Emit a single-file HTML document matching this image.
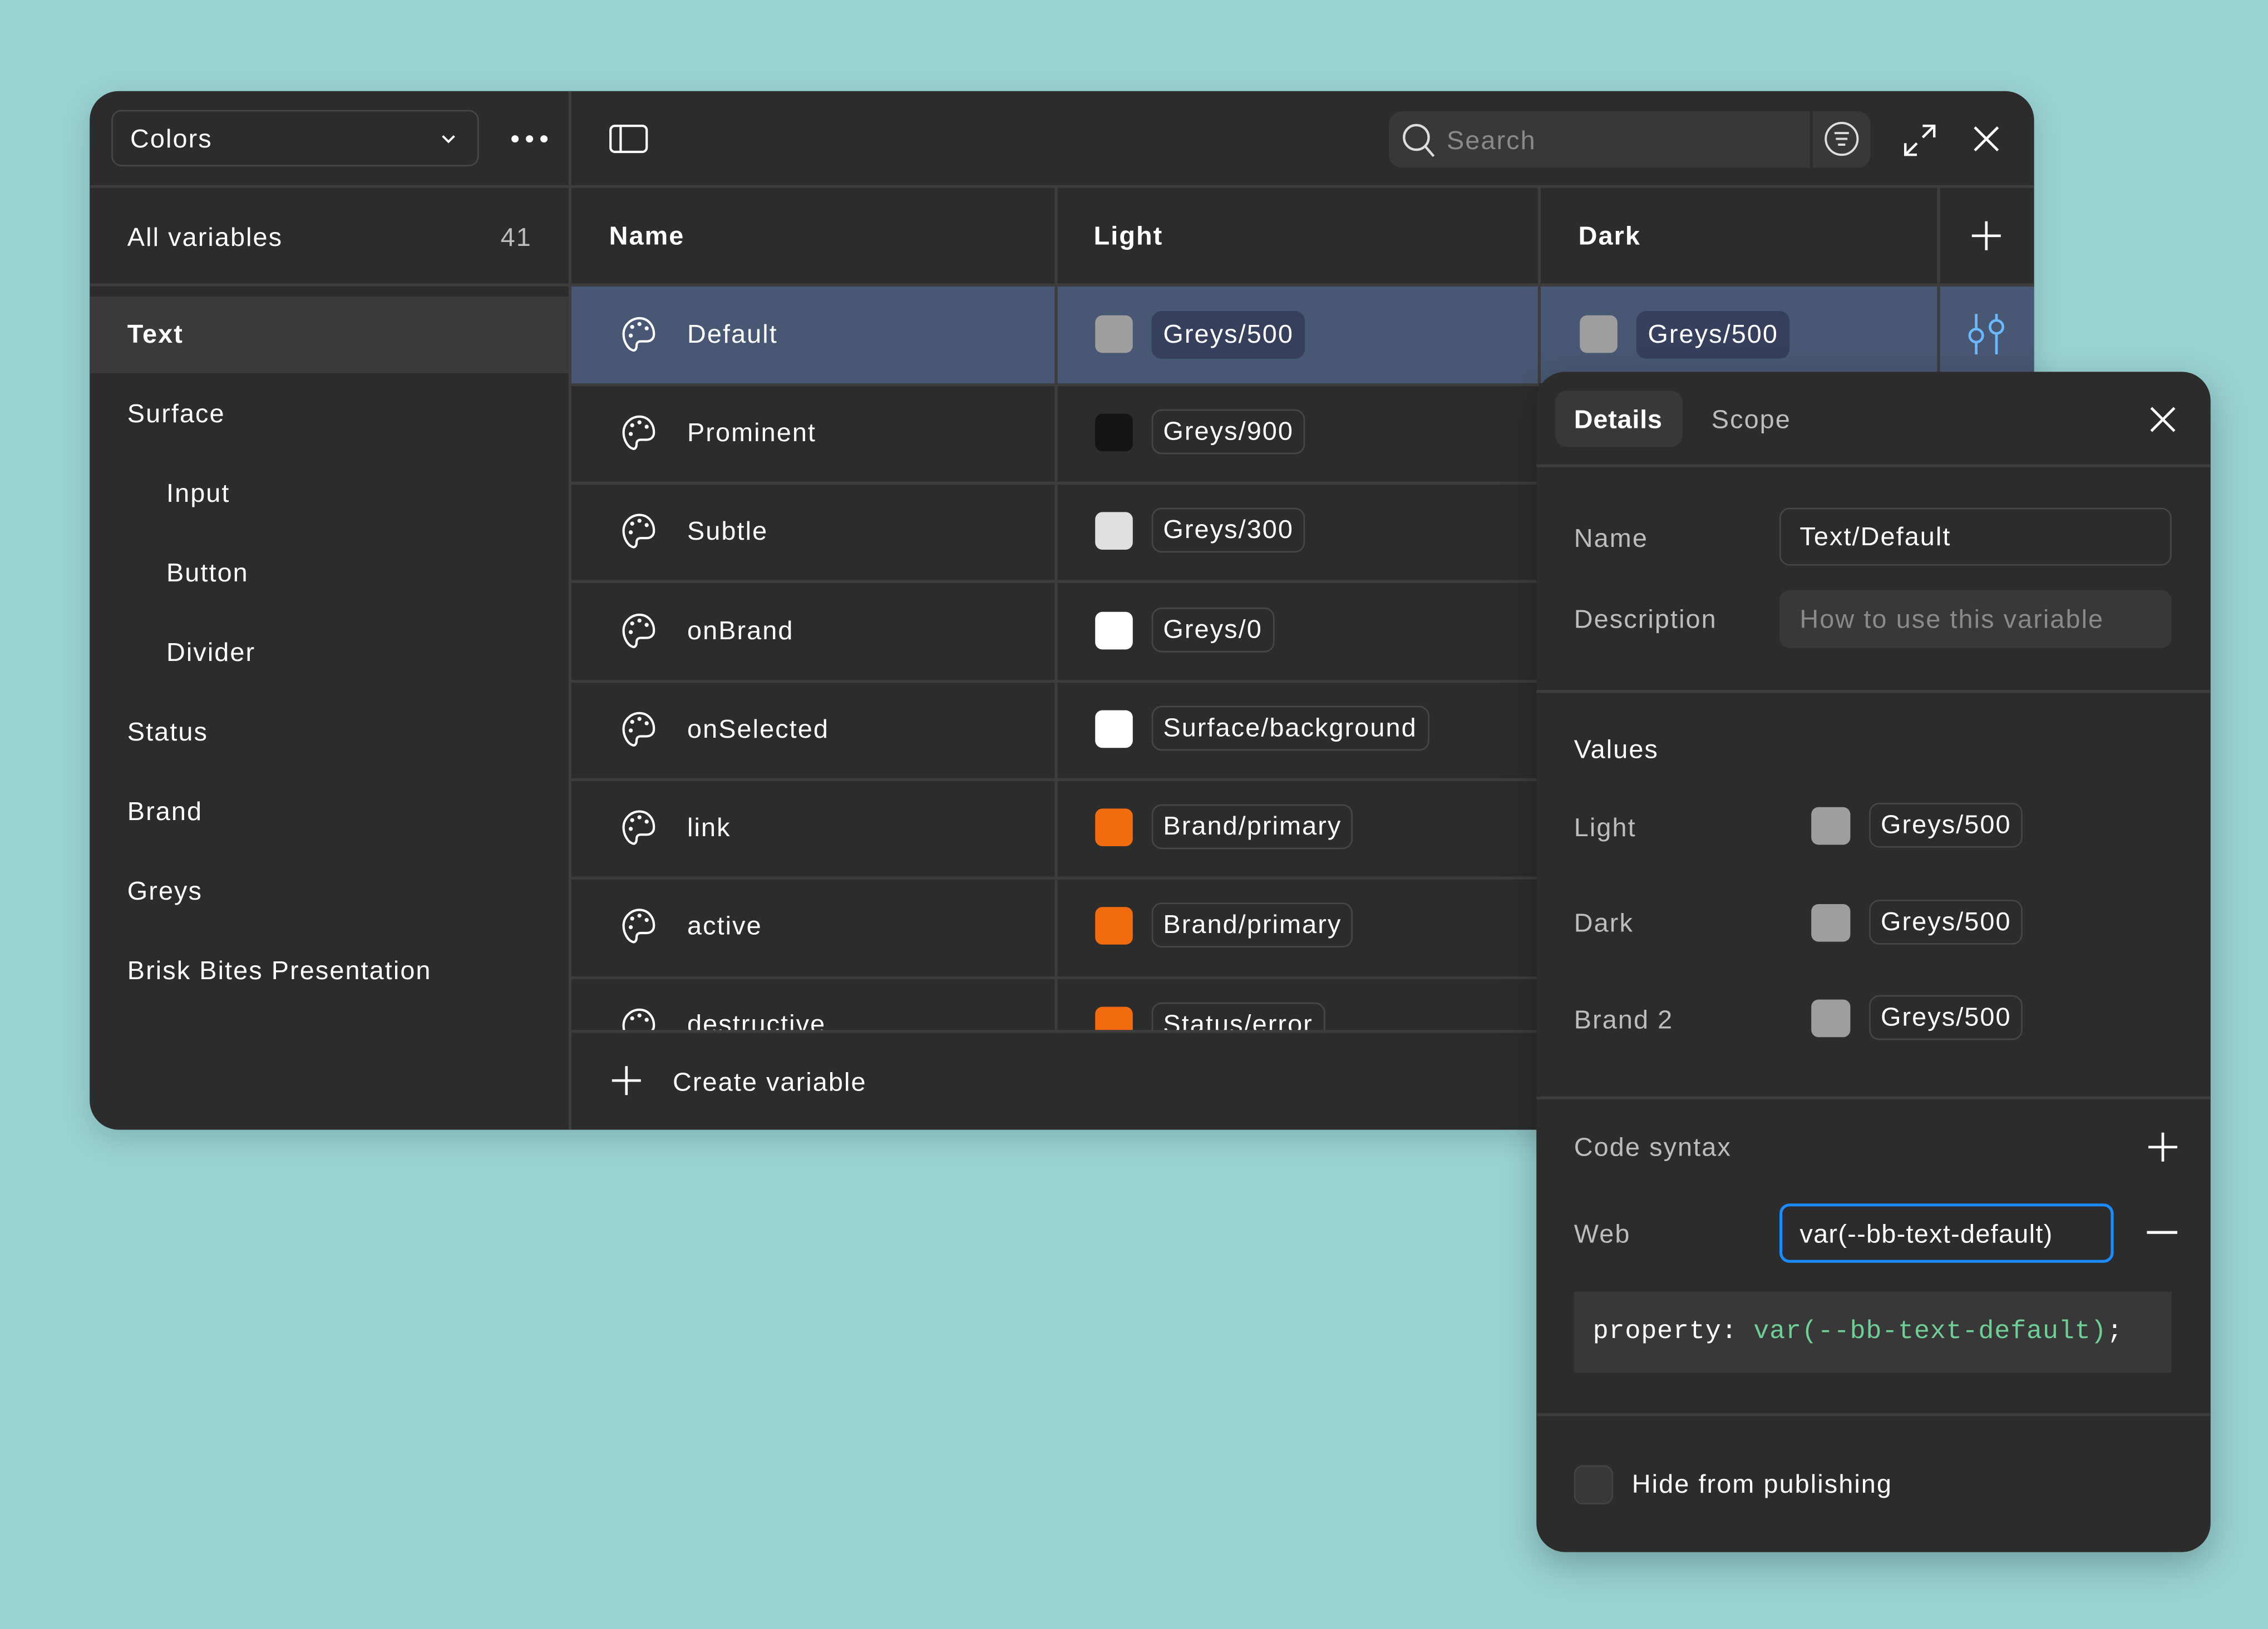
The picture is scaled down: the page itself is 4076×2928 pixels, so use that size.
<!DOCTYPE html>
<html><head><meta charset="utf-8"><style>
*{box-sizing:border-box;margin:0;padding:0}
body{width:4076px;height:2928px;overflow:hidden;background:#99d2d3;font-family:"Liberation Sans",sans-serif}
#s{position:absolute;left:0;top:0;width:1568px;height:1126px;transform:scale(2.6);transform-origin:0 0}
.a{position:absolute}
.t{position:absolute;color:#fff;font-size:18px;line-height:22px;white-space:nowrap;letter-spacing:0.8px}
.g{color:#bdbdbd}
.p{position:absolute;height:31px;border:1.5px solid #474747;border-radius:7px;color:#fff;font-size:18px;line-height:28px;padding:0 7px;white-space:nowrap;letter-spacing:0.8px}
.sw{position:absolute;width:26px;height:26px;border-radius:5px}
.hl{position:absolute;height:2px;background:#3d3d3d}
.vl{position:absolute;width:1.5px;background:#3d3d3d}
svg{position:absolute;overflow:visible}
</style></head><body><div id="s">
<div class="a" style="left:62px;top:63px;width:1344px;height:718px;background:#2c2c2c;border-radius:20px;overflow:hidden;box-shadow:0 6px 20px rgba(0,0,0,.15)">
</div>
<div class="hl" style="left:62px;top:128px;width:1344px"></div>
<div class="vl" style="left:393px;top:63px;height:718px"></div>
<div class="a" style="left:77px;top:76px;width:254px;height:39px;border:1.5px solid #474747;border-radius:7px"></div>
<div class="t" style="left:90px;top:85px">Colors</div>
<svg style="left:305px;top:93px" width="10" height="6"><path d="M1 1l4 4 4-4" stroke="#fff" stroke-width="1.5" fill="none"/></svg>
<svg style="left:353px;top:92px" width="28" height="8"><circle cx="3" cy="4" r="2.5" fill="#fff"/><circle cx="13" cy="4" r="2.5" fill="#fff"/><circle cx="23" cy="4" r="2.5" fill="#fff"/></svg>
<svg style="left:421px;top:86px" width="28" height="20"><rect x="1" y="1" width="25" height="18" rx="3" stroke="#fff" stroke-width="1.6" fill="none"/><path d="M8 1v18" stroke="#fff" stroke-width="1.6"/></svg>
<div class="a" style="left:960px;top:77px;width:333px;height:39px;background:#383838;border-radius:9px"></div>
<div class="vl" style="left:1251px;top:77px;height:39px;background:#2c2c2c"></div>
<svg style="left:969px;top:85px" width="24" height="24"><circle cx="10" cy="10" r="8.5" stroke="#ddd" stroke-width="1.7" fill="none"/><path d="M16 16l6 7" stroke="#ddd" stroke-width="1.7"/></svg>
<div class="t" style="left:1000px;top:86px;color:#8a8a8a">Search</div>
<svg style="left:1261px;top:84px" width="24" height="24"><circle cx="12" cy="12" r="11" stroke="#ddd" stroke-width="1.5" fill="none"/><path d="M7 8h10M8 12h8M9.5 16h5" stroke="#ddd" stroke-width="1.5"/></svg>
<svg style="left:1315px;top:85px" width="24" height="24"><path d="M14 2h8v8M22 2l-8 8M10 22H2v-8M2 22l8-8" stroke="#fff" stroke-width="1.7" fill="none"/></svg>
<svg style="left:1364px;top:87px" width="18" height="18"><path d="M1 1l16 16M17 1L1 17" stroke="#fff" stroke-width="1.8"/></svg>
<div class="t" style="left:88px;top:153px">All variables</div>
<div class="t g" style="left:346px;top:153px">41</div>
<div class="hl" style="left:62px;top:196px;width:332px"></div>
<div class="a" style="left:62px;top:205px;width:331px;height:53px;background:#3a3a3a"></div>
<div class="t" style="left:88px;top:220px;font-weight:bold">Text</div>
<div class="t" style="left:88px;top:275px">Surface</div>
<div class="t" style="left:115px;top:330px">Input</div>
<div class="t" style="left:115px;top:385px">Button</div>
<div class="t" style="left:115px;top:440px">Divider</div>
<div class="t" style="left:88px;top:495px">Status</div>
<div class="t" style="left:88px;top:550px">Brand</div>
<div class="t" style="left:88px;top:605px">Greys</div>
<div class="t" style="left:88px;top:660px">Brisk Bites Presentation</div>
<div class="t" style="left:421px;top:152px;font-weight:bold">Name</div>
<div class="t" style="left:756px;top:152px;font-weight:bold">Light</div>
<div class="t" style="left:1091px;top:152px;font-weight:bold">Dark</div>
<svg style="left:1363px;top:153px" width="20" height="20"><path d="M10 0v20M0 10h20" stroke="#fff" stroke-width="1.8"/></svg>
<div class="a" style="left:395px;top:198px;width:1011px;height:67px;background:#485773"></div>
<div class="vl" style="left:729px;top:129px;height:584px"></div>
<div class="vl" style="left:1063px;top:129px;height:136px"></div>
<div class="vl" style="left:1339px;top:129px;height:136px"></div>
<div class="hl" style="left:394px;top:196px;width:1012px"></div>
<div class="hl" style="left:394px;top:265px;width:670px"></div>
<div class="hl" style="left:394px;top:333px;width:670px"></div>
<div class="hl" style="left:394px;top:401px;width:670px"></div>
<div class="hl" style="left:394px;top:470px;width:670px"></div>
<div class="hl" style="left:394px;top:538px;width:670px"></div>
<div class="hl" style="left:394px;top:606px;width:670px"></div>
<div class="hl" style="left:394px;top:675px;width:670px"></div>
<div class="hl" style="left:394px;top:712px;width:670px"></div>
<div class="a" style="left:395px;top:677px;width:668px;height:35px;overflow:hidden">
 <svg style="left:35px;top:20px" width="24" height="26"><path d="M12 1C6 1 1 6 1 12c0 5 3 10 6 11 2 1 3-1 3-3 0-2 1-3 3-3h4c3 0 5-2 5-5C22 6 18 1 12 1z" stroke="#fff" stroke-width="1.6" fill="none"/><circle cx="7" cy="7" r="1.4" fill="#fff"/><circle cx="12" cy="5" r="1.4" fill="#fff"/><circle cx="17" cy="8" r="1.4" fill="#fff"/></svg>
 <div class="t" style="left:80px;top:20px">destructive</div>
 <div class="sw" style="left:362px;top:19px;background:#f26b0f"></div>
 <div class="p" style="left:401px;top:16px">Status/error</div>
</div>
<div id="rows"></div>
<div class="hl" style="left:1339px;top:196px;width:67px"></div>
<svg style="left:1360px;top:217px" width="26" height="28"><path d="M6 0v10M6 20v8M20 0v4M20 14v14" stroke="#6cb8ff" stroke-width="1.8"/><circle cx="6" cy="15" r="4.5" stroke="#6cb8ff" stroke-width="1.8" fill="none"/><circle cx="20" cy="9" r="4.5" stroke="#6cb8ff" stroke-width="1.8" fill="none"/></svg>
<div class="sw" style="left:1092px;top:218px;background:#9e9e9e"></div>
<div class="p" style="left:1131px;top:215px;background:#363f5b;border-color:#363f5b;height:33px;line-height:30px">Greys/500</div>
<svg style="left:423px;top:737px" width="20" height="20"><path d="M10 0v20M0 10h20" stroke="#fff" stroke-width="1.8"/></svg>
<div class="t" style="left:465px;top:737px">Create variable</div>

<div class="a" style="left:1062px;top:257px;width:466px;height:816px;background:#2c2c2c;border-radius:20px;box-shadow:0 8px 24px rgba(0,0,0,.25)"></div>
<div class="a" style="left:1075px;top:270px;width:88px;height:39px;background:#383838;border-radius:8px"></div>
<div class="t" style="left:1088px;top:279px;font-weight:bold;letter-spacing:0.3px">Details</div>
<div class="t g" style="left:1183px;top:279px">Scope</div>
<svg style="left:1486px;top:281px" width="18" height="18"><path d="M1 1l16 16M17 1L1 17" stroke="#fff" stroke-width="1.8"/></svg>
<div class="hl" style="left:1062px;top:321px;width:466px"></div>
<div class="t g" style="left:1088px;top:361px">Name</div>
<div class="a" style="left:1230px;top:351px;width:271px;height:40px;border:1.5px solid #474747;border-radius:7px"></div>
<div class="t" style="left:1244px;top:360px">Text/Default</div>
<div class="t g" style="left:1088px;top:417px">Description</div>
<div class="a" style="left:1230px;top:408px;width:271px;height:40px;background:#383838;border-radius:7px"></div>
<div class="t" style="left:1244px;top:417px;color:#8a8a8a">How to use this variable</div>
<div class="hl" style="left:1062px;top:477px;width:466px"></div>
<div class="t" style="left:1088px;top:507px">Values</div>
<div class="t g" style="left:1088px;top:561px">Light</div>
<div class="sw" style="left:1252px;top:558px;width:27px;background:#9e9e9e"></div>
<div class="p" style="left:1292px;top:555px">Greys/500</div>
<div class="t g" style="left:1088px;top:627px">Dark</div>
<div class="sw" style="left:1252px;top:625px;width:27px;background:#9e9e9e"></div>
<div class="p" style="left:1292px;top:622px">Greys/500</div>
<div class="t g" style="left:1088px;top:694px">Brand 2</div>
<div class="sw" style="left:1252px;top:691px;width:27px;background:#9e9e9e"></div>
<div class="p" style="left:1292px;top:688px">Greys/500</div>
<div class="hl" style="left:1062px;top:758px;width:466px"></div>
<div class="t g" style="left:1088px;top:782px">Code syntax</div>
<svg style="left:1485px;top:783px" width="20" height="20"><path d="M10 0v20M0 10h20" stroke="#fff" stroke-width="1.8"/></svg>
<div class="t g" style="left:1088px;top:842px">Web</div>
<div class="a" style="left:1230px;top:832px;width:231px;height:41px;border:2px solid #1a8cff;border-radius:7px"></div>
<div class="t" style="left:1244px;top:842px;letter-spacing:0.5px">var(--bb-text-default)</div>
<div class="a" style="left:1484px;top:851px;width:21px;height:2px;background:#fff"></div>
<div class="a" style="left:1088px;top:893px;width:413px;height:56px;background:#383838"></div>
<div class="t" style="left:1101px;top:910px;font-family:'Liberation Mono',monospace;font-size:18px;letter-spacing:0.3px">property: <span style="color:#6fcf97">var(--bb-text-default)</span>;</div>
<div class="hl" style="left:1062px;top:977px;width:466px"></div>
<div class="a" style="left:1088px;top:1013px;width:27px;height:27px;background:#383838;border:1.5px solid #444;border-radius:6px"></div>
<div class="t" style="left:1128px;top:1015px">Hide from publishing</div>
</div>
<script>
var r=[["Default","#9e9e9e","Greys/500"],["Prominent","#141414","Greys/900"],["Subtle","#e0e0e0","Greys/300"],["onBrand","#fff","Greys/0"],["onSelected","#fff","Surface/background"],["link","#f26b0f","Brand/primary"],["active","#f26b0f","Brand/primary"]];
var tops=[197,265,333,402,470,538,606],h="";
for(var i=0;i<r.length;i++){var y=tops[i],c=y+34,sel=i==0;
h+='<svg style="left:430px;top:'+(c-12)+'px" width="24" height="26"><path d="M12 1C6 1 1 6 1 12c0 5 3 10 6 11 2 1 3-1 3-3 0-2 1-3 3-3h4c3 0 5-2 5-5C22 6 18 1 12 1z" stroke="#fff" stroke-width="1.6" fill="none"/><circle cx="6" cy="13" r="1.4" fill="#fff"/><circle cx="7" cy="7" r="1.4" fill="#fff"/><circle cx="12" cy="5" r="1.4" fill="#fff"/><circle cx="17" cy="8" r="1.4" fill="#fff"/></svg>';
h+='<div class="t" style="left:475px;top:'+(c-11)+'px">'+r[i][0]+'</div>';
h+='<div class="sw" style="left:757px;top:'+(c-13)+'px;background:'+r[i][1]+'"></div>';
h+='<div class="p" style="left:796px;top:'+(c-16)+'px;'+(sel?'background:#363f5b;border-color:#363f5b;height:33px;line-height:30px':'')+'">'+r[i][2]+'</div>';}
document.getElementById('rows').outerHTML=h;
</script>
</body></html>
